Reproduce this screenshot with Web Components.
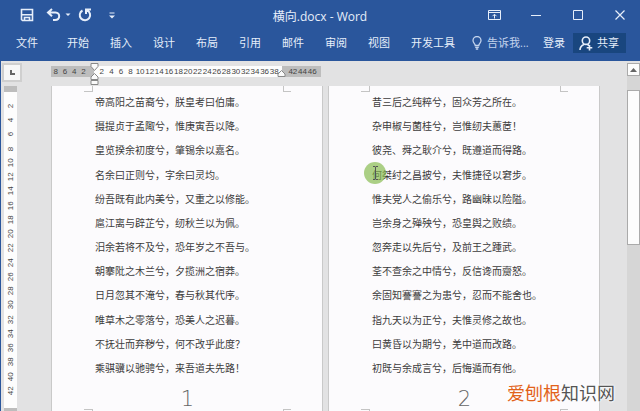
<!DOCTYPE html>
<html lang="zh-CN">
<head>
<meta charset="utf-8">
<title>横向.docx - Word</title>
<style>
html,body{height:100%;margin:0;overflow:hidden}
body{font-family:"Open Sans","Noto Sans CJK SC",sans-serif}
</style>
</head>
<body>
<word-app></word-app>
<script>
const define=(name,html)=>customElements.define(name,class extends HTMLElement{
  connectedCallback(){
    if(this.shadowRoot)return;
    const t=document.createElement('template');
    t.innerHTML=typeof html==='function'?html(this):html;
    this.attachShadow({mode:'open'}).append(t.content.cloneNode(true));
  }
});

define('title-bar',`<style>
:host{display:grid;grid-template-columns:1fr auto 1fr;align-items:center;height:30px;color:#e6eefa}
nav{display:flex;align-items:center}
button{all:unset;display:flex;align-items:center;justify-content:center}
svg{display:block;fill:none;stroke:currentColor}
.l{padding-left:20px;gap:3px}
.l button:nth-child(2){margin-left:9px}
.l button:nth-child(4){margin-left:4px}
.l button:last-child{margin-left:14px}
.r{justify-content:flex-end;padding-right:8px}
.r button{width:24px;margin-left:18px}
h1{margin:0;padding-top:4px;font-size:12px;line-height:16px;font-weight:400;white-space:nowrap}
</style>
<nav class="l">
<button aria-label="保存"><svg width="14" height="14" viewBox="0 0 14 14" stroke-width="1.6"><path d="M1.5 1.5h11v11h-10l-1-1zM2 6.8h10M4.5 12.5V9.5h5v3"/></svg></button>
<button aria-label="撤消"><svg width="16" height="14" viewBox="0 0 16 14" stroke-width="2"><path d="M6 1L2 4.5l4 3.7M2.5 4.5h7c5 0 5 7.5-.5 7.5H7"/></svg></button>
<button aria-label="撤消列表"><svg width="6" height="4" viewBox="0 0 6 4"><path d="M.5.5h5L3 3z" fill="currentColor" stroke="none"/></svg></button>
<button aria-label="重复"><svg width="14" height="14" viewBox="0 0 14 14" stroke-width="2"><path d="M4.5 2.5a5.2 5.2 0 1 0 4.5-.2M8 6V1.5h5"/></svg></button>
<button aria-label="自定义快速访问工具栏"><svg width="6" height="7" viewBox="0 0 6 7"><path d="M.5 1h5"/><path d="M0 3.5h6L3 6.5z" fill="currentColor" stroke="none"/></svg></button>
</nav>
<h1>横向.docx - Word</h1>
<nav class="r">
<button aria-label="功能区显示选项"><svg width="13" height="11" viewBox="0 0 13 11"><path d="M.5.5h12v9H.5zM.5 2.5h12M6.500 8.500V4.500M4.500 6.200l2-2 2 2"/></svg></button>
<button aria-label="最小化"><svg width="10" height="10" viewBox="0 0 10 10"><path d="M0 5.500h10"/></svg></button>
<button aria-label="最大化"><svg width="10" height="10" viewBox="0 0 10 10"><path d="M.5.500h9v9h-9z"/></svg></button>
<button aria-label="关闭"><svg width="10" height="10" viewBox="0 0 10 10" stroke-width="1.2"><path d="M.5.5l9 9M9.5.5l-9 9"/></svg></button>
</nav>`);

define('ribbon-tabs',`<style>
:host{display:flex;align-items:center;height:31px;padding:0 14px 5px 16px;box-sizing:border-box;color:#e6eefa;font-size:11px;line-height:16px;white-space:nowrap}
nav{display:flex;gap:21px}
button{all:unset;font-weight:400;display:flex;align-items:center}
nav button:first-child{margin-right:8px}
.tell{margin-left:17px;gap:5px;color:#c3d3ec}
.in{margin-left:auto;margin-right:8px}
.share{background:#19467f;height:20px;padding:0 7px 0 6px;gap:4px}
svg{display:block;fill:none;stroke:currentColor}
</style>
<nav><button>文件</button><button>开始</button><button>插入</button><button>设计</button><button>布局</button><button>引用</button><button>邮件</button><button>审阅</button><button>视图</button><button>开发工具</button></nav>
<button class="tell"><svg width="10" height="14" viewBox="0 0 10 14" stroke-width="1.3"><path d="M3.2 9.5C3.2 7.5 1 7 1 4.500a4 4 0 0 1 8 0C9 7 6.800 7.500 6.800 9.500zM3.200 11.300h3.600M3.800 13h2.400"/></svg><span>告诉我...</span></button>
<button class="in">登录</button>
<button class="share"><svg width="14" height="15" viewBox="0 0 14 15" stroke-width="1.6"><circle cx="7" cy="4.7" r="3.7"/><path d="M1 14c0-3 1.500-4.500 4-5.500M8.500 8.500l1.500 1M10.500 9v5.500M7.700 11.700h5.600"/></svg><span>共享</span></button>`);

const cells=a=>a.map(n=>`<span>${n}</span>`).join('');
const evens=(a,b)=>Array.from({length:(b-a)/2+1},(_,i)=>a+i*2);

define('h-ruler',`<style>
:host{display:flex;width:270px;height:11px;font:8px/11px "Liberation Sans",sans-serif;color:#444;position:relative}
div{display:grid;grid-auto-flow:column;grid-auto-columns:1fr;box-sizing:border-box}
span{display:flex;justify-content:center;min-width:0}
.a{width:43px;background:#bdbdbd;padding-right:6px}
.b{flex:1;background:#fdfdfd;padding:0 3px}
.c{width:39px;background:#bdbdbd;padding:0 4px 0 6px}
svg{position:absolute;fill:#fafafa;stroke:#888}
.m{left:39px;top:-4px}
.n{right:35px;top:3px}
</style><div class="a">${cells([8,6,4,2])}</div><div class="b">${cells(evens(2,38))}</div><div class="c">${cells([42,44,46])}</div>
<svg class="m" width="9" height="23" viewBox="0 0 9 23"><path d="M1 1.5h7v3L4.500 8.500 1 4.500zM4.500 11.500L8 15v2.500H1V15zM1 18.500h7v4H1z"/></svg>
<svg class="n" width="9" height="9" viewBox="0 0 9 9"><path d="M4.5 1.5L8 5v2.500H1V5z"/></svg>`);

define('v-ruler',`<style>
:host{display:flex;flex-direction:column;width:13px;font:8px "Liberation Sans",sans-serif;color:#444}
i{height:6px;background:#bdbdbd}
i:last-child{height:3px}
div{flex:1;background:#fdfdfd;display:grid;grid-auto-rows:1fr;padding:7px 0 10px;min-height:0}
span{writing-mode:vertical-rl;transform:rotate(180deg);line-height:13px;min-height:0;display:flex;justify-content:center}
</style><i></i><div>${cells(evens(2,42))}</div><i></i>`);

define('doc-page',e=>`<style>
:host{display:flex;flex-direction:column;flex:0 0 270px;box-sizing:border-box;background:#fcfbfd;box-shadow:-1px 0 #c9c9c9,1px 0 #c9c9c9;padding:0 31px 0 32px}
.marks{display:flex;justify-content:space-between}
.marks i{width:8px;height:5px;border:solid #c4c4c4;border-width:0 1px 1px 0}
.marks i+i{width:7px;border-width:0 0 1px 1px}
.foot i,.foot i+i{height:1px;border-bottom:0;border-top-width:1px}
.body{flex:1;display:flex;flex-direction:column;justify-content:space-between;padding:1px 0 12px 11px;font-size:10px;line-height:18px;color:#3c3c3c;white-space:nowrap}
footer{text-align:center;font-family:"DejaVu Sans",sans-serif;font-weight:200;font-size:21px;line-height:20px;color:#666}
</style><div class="marks"><i></i><i></i></div><div class="body"><slot></slot></div><footer>${e.getAttribute('number')}</footer><div class="marks foot"><i></i><i></i></div>`);

define('scroll-bar',`<style>
:host{display:flex;flex-direction:column;width:13px;background:#d6d6d6}
button{all:unset;height:13px;box-sizing:border-box;border:1px solid #aaa;background:#fcfcfc;display:flex;align-items:center;justify-content:center}
div{margin-top:14px;height:155px;box-sizing:border-box;border:1px solid #aaa;background:#fcfcfc}
</style><button aria-label="向上滚动"><svg width="7" height="4" viewBox="0 0 7 4"><path d="M0 4l3.5-4L7 4z" fill="#666"/></svg></button><div></div>`);

define('mouse-pointer',`<style>
:host{position:absolute;left:363px;top:101px;width:22px;height:22px;border-radius:50%;background:#83b94aaa;display:flex;justify-content:center;align-items:center}
svg{fill:none;stroke:#555}
</style><svg width="7" height="14" viewBox="0 0 7 14"><path d="M1 .5h2l.5 1 .5-1h2M3.5 1v12M1 13.5h2l.5-1 .5 1h2"/></svg>`);

define('site-mark',`<style>
:host{position:absolute;left:506px;bottom:6px;display:block;font:18px/26px "Noto Sans CJK SC",sans-serif;color:#555;white-space:nowrap;text-shadow:0 0 2px #fff,0 0 2px #fff,0 0 3px #fff}
b{font-weight:400;color:#e2621b}
</style><b>爱刨根</b>知识网`);

const one=['帝高阳之苗裔兮，朕皇考曰伯庸。','摄提贞于孟陬兮，惟庚寅吾以降。','皇览揆余初度兮，肇锡余以嘉名。','名余曰正则兮，字余曰灵均。','纷吾既有此内美兮，又重之以修能。','扈江离与辟芷兮，纫秋兰以为佩。','汨余若将不及兮，恐年岁之不吾与。','朝搴阰之木兰兮，夕揽洲之宿莽。','日月忽其不淹兮，春与秋其代序。','唯草木之零落兮，恐美人之迟暮。','不抚壮而弃秽兮，何不改乎此度？','乘骐骥以驰骋兮，来吾道夫先路！'];
const two=['昔三后之纯粹兮，固众芳之所在。','杂申椒与菌桂兮，岂惟纫夫蕙茝！','彼尧、舜之耿介兮，既遵道而得路。','何桀纣之昌披兮，夫惟捷径以窘步。','惟夫党人之偷乐兮，路幽昧以险隘。','岂余身之殚殃兮，恐皇舆之败绩。','忽奔走以先后兮，及前王之踵武。','荃不查余之中情兮，反信谗而齌怒。','余固知謇謇之为患兮，忍而不能舍也。','指九天以为正兮，夫惟灵修之故也。','曰黄昏以为期兮，羌中道而改路。','初既与余成言兮，后悔遁而有他。'];
const ps=a=>a.map(t=>`<div>${t}</div>`).join('');

define('word-app',`<style>
:host{display:flex;flex-direction:column;height:100%;background:#e2e2e3}
header{background:#2a569c}
main{flex:1;display:flex;position:relative;min-height:0;border-left:1px solid #2a569c;overflow:hidden}
.left{width:21px;display:flex;flex-direction:column;align-items:center;padding:2px 0 0 1px;box-sizing:border-box}
.tab{width:20px;height:19px;box-sizing:border-box;border:2px solid #cfcfcf;background:#f7f7f7;display:flex;align-items:center;justify-content:center;margin-bottom:4px}
.tab i{width:5px;height:5px;border:solid #666;border-width:0 0 2px 2px;box-sizing:border-box}
v-ruler{flex:1;min-height:0;margin-right:3px}
.mid{flex:1;padding:5px 0 0 29px;display:flex;flex-direction:column;min-width:0}
.pages{flex:1;display:flex;gap:7px;margin-top:9px;padding-left:1px;min-height:0}
scroll-bar{margin-top:2px}
</style>
<header><title-bar></title-bar><ribbon-tabs></ribbon-tabs></header>
<main><div class="left"><div class="tab"><i></i></div><v-ruler></v-ruler></div>
<div class="mid"><h-ruler></h-ruler><div class="pages"><doc-page number="1">${ps(one)}</doc-page><doc-page number="2">${ps(two)}</doc-page></div></div>
<scroll-bar></scroll-bar><mouse-pointer></mouse-pointer><site-mark></site-mark></main>`);
</script>
</body>
</html>
